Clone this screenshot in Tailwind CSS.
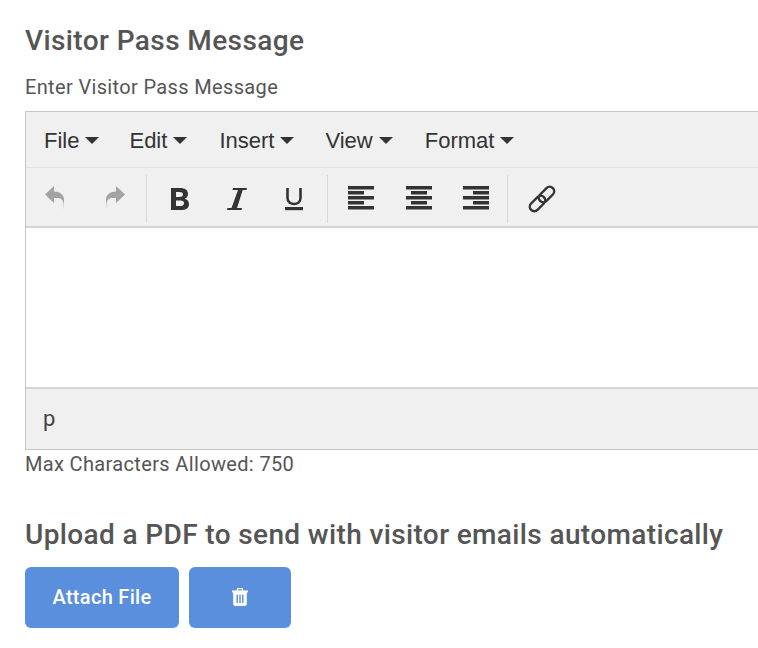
<!DOCTYPE html>
<html><head><meta charset="utf-8"><script src="https://cdn.jsdelivr.net/npm/@tailwindcss/browser@4"></script></head>
<body class="bg-white overflow-hidden">
<div class="w-[758px] h-[648px] overflow-hidden pl-[25px] pt-[23px] font-['Roboto',sans-serif] text-[#555]">
  <h1 class="text-[28px] leading-[36px] font-medium tracking-[0.4px]">Visitor Pass Message</h1>
  <p class="mt-[14px] text-[20px] leading-[28px] tracking-[0.35px]">Enter Visitor Pass Message</p>
  <div class="mt-[10px] w-[760px] border border-[#c5c5c5] font-['Liberation_Sans',sans-serif] text-[#333]">
    <div class="h-[56px] bg-[#f0f0f0] border-b border-[#e2e2e2] flex items-center pl-[18px] pt-[1px] gap-[31px] text-[22px]">
      <span class="flex items-center gap-[6px]">File<i class="w-0 h-0 border-x-[7px] border-x-transparent border-t-[7px] border-t-[#333]"></i></span>
      <span class="flex items-center gap-[6px] -ml-[1px]">Edit<i class="w-0 h-0 border-x-[7px] border-x-transparent border-t-[7px] border-t-[#333]"></i></span>
      <span class="flex items-center gap-[6px] ml-[1px]">Insert<i class="w-0 h-0 border-x-[7px] border-x-transparent border-t-[7px] border-t-[#333]"></i></span>
      <span class="flex items-center gap-[6px]">View<i class="w-0 h-0 border-x-[7px] border-x-transparent border-t-[7px] border-t-[#333]"></i></span>
      <span class="flex items-center gap-[6px] ml-[1px]">Format<i class="w-0 h-0 border-x-[7px] border-x-transparent border-t-[7px] border-t-[#333]"></i></span>
    </div>
    <div class="h-[60px] bg-[#f0f0f0] border-b-2 border-[#d4d4d4] pt-[3px] flex items-center">
      <div class="flex items-center h-[48px] w-[121px] border-r border-[#d9d9d9] pl-[19px] gap-[40px]">
        <svg class="w-[20px] h-[25px]" viewBox="0 0 20 25"><path fill="#a3a3a3" d="M0 8.500 9 0v5.500c6 0 10 3 10 8.500v3h-.5c-.5-3.500-3-5-6-5H9V17Z"/><path fill="#a3a3a3" opacity=".5" d="M18 16h1l-.5 8Z"/></svg>
        <svg class="w-[20px] h-[25px]" viewBox="0 0 20 25"><path fill="#a3a3a3" d="M20 8.500 11 0v5.500C5 5.500 1 8.500 1 14v3h.5c.5-3.500 3-5 6-5H11V17Z"/><path fill="#a3a3a3" opacity=".5" d="M2 16H1l.5 8Z"/></svg>
      </div>
      <div class="flex items-center h-[48px] w-[181px] border-r border-[#d9d9d9] pl-[24px] gap-[38px]">
        <svg class="w-[18px] h-[24px]" viewBox="0 0 18 24"><path fill="#333" fill-rule="evenodd" d="M0 1h9c5 0 8 2 8 6 0 2.500-1.300 4-3.300 4.700C16.300 12.400 18 14.200 18 17c0 4-3 6-8 6H0ZM5 5v5h3.500c2 0 3.500-.7 3.500-2.500S10.500 5 8.500 5ZM5 13.500V19h4.500c2.200 0 3.500-.9 3.500-2.800s-1.300-2.700-3.500-2.700Z"/></svg>
        <svg class="w-[20px] h-[24px]" viewBox="0 0 20 24"><path fill="#333" d="M6 1h14l-.5 2h-3.800L10 21H15l-.5 2H0l.5-2h4L11 3H5.500Z"/></svg>
        <svg class="w-[18px] h-[24px]" viewBox="0 0 18 24"><path fill="none" stroke="#333" stroke-width="2.600" d="M2.500 1v10c0 8 13 8 13 0V1"/><rect x="0" y="20" width="18" height="3.200" fill="#333"/></svg>
      </div>
      <div class="flex items-center h-[48px] w-[180px] border-r border-[#d9d9d9] pl-[20px] gap-[31.5px]">
        <svg class="w-[26px] h-[25px]" viewBox="0 0 26 25" fill="#333"><rect y="0" width="26" height="3.500"/><rect y="5" width="16" height="3.500"/><rect y="10" width="26" height="3.500"/><rect y="15" width="16" height="3.500"/><rect y="20" width="26" height="3.500"/></svg>
        <svg class="w-[26px] h-[25px]" viewBox="0 0 26 25" fill="#333"><rect y="0" width="26" height="3.500"/><rect x="5" y="5" width="16" height="3.500"/><rect y="10" width="26" height="3.500"/><rect x="5" y="15" width="16" height="3.500"/><rect y="20" width="26" height="3.500"/></svg>
        <svg class="w-[26px] h-[25px]" viewBox="0 0 26 25" fill="#333"><rect y="0" width="26" height="3.500"/><rect x="10" y="5" width="16" height="3.500"/><rect y="10" width="26" height="3.500"/><rect x="10" y="15" width="16" height="3.500"/><rect y="20" width="26" height="3.500"/></svg>
      </div>
      <div class="pl-[20px] flex items-center">
        <svg class="w-[28px] h-[28px]" viewBox="0 0 28 28" fill="none" stroke="#333" stroke-width="2.400"><rect x="9.500" y="5" width="18" height="9" rx="4.500" transform="rotate(-45 18.500 9.500)"/><rect x="0.500" y="14" width="18" height="9" rx="4.500" transform="rotate(-45 9.500 18.500)"/></svg>
      </div>
    </div>
    <div class="h-[161px] bg-white border-b-2 border-[#d4d4d4]"></div>
    <div class="h-[60px] bg-[#f0f0f0] flex items-center pl-[17px] text-[22px] leading-none font-['Roboto',sans-serif] text-[#444]">p</div>
  </div>
  <p class="text-[20px] leading-[28px] tracking-[0.35px]">Max Characters Allowed: 750</p>
  <h2 class="mt-[39px] text-[28px] leading-[36px] font-medium tracking-[0.37px]">Upload a PDF to send with visitor emails automatically</h2>
  <div class="mt-[14px] flex gap-[10px]">
    <button class="w-[154px] h-[61px] rounded-[6px] bg-[#5a8fdd] text-white text-[20px] font-medium tracking-[0.3px] flex items-center justify-center pb-[1px]">Attach File</button>
    <button class="w-[102px] h-[61px] rounded-[6px] bg-[#5a8fdd] flex items-center justify-center pb-[2px]">
      <svg class="w-[16px] h-[18px]" viewBox="0 0 16 18"><path fill="#fff" fill-rule="evenodd" d="M5.500 0h5l1.200 2.500H16v2h-1.200V16a2 2 0 0 1-2 2H3.200a2 2 0 0 1-2-2V4.500H0v-2h4.300ZM6.200 1.200 5.700 2.500h4.600L9.800 1.200ZM4.500 6.500v8.500h1.400V6.500ZM7.300 6.500v8.500h1.400V6.500ZM10.100 6.500v8.500h1.400V6.500Z"/></svg>
    </button>
  </div>
</div>
</body></html>
